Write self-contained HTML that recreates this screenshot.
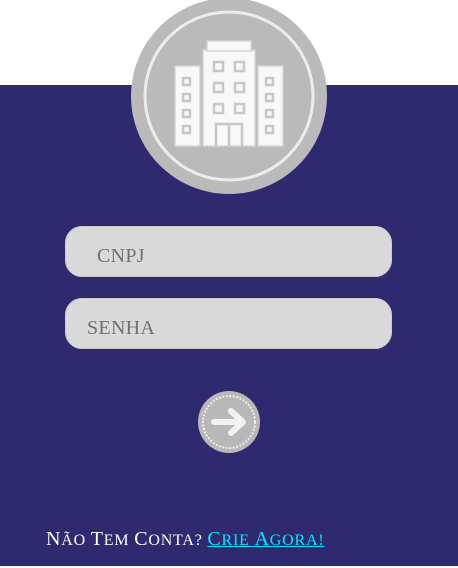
<!DOCTYPE html>
<html><head><meta charset="utf-8"><style>
html,body{margin:0;padding:0;width:458px;height:568px;background:#fff;overflow:hidden;position:relative}
.panel{position:absolute;left:0;top:85px;width:458px;height:481px;background:#2f2a70}
.inp{position:absolute;left:65px;width:327px;height:51px;background:#d9d9d9;border-radius:17px;box-shadow:inset 0 0 0 1px #c9c9c9}
.inp span{position:absolute;font-family:"Liberation Serif",serif;font-size:20px;color:#707070;letter-spacing:0.3px}
.bottom{position:absolute;left:46px;top:528px;font-family:"Liberation Serif",serif;font-size:16px;color:#fff;letter-spacing:0.8px;white-space:nowrap}
.bottom b{font-weight:normal;font-size:20px}
.bottom a{color:#00e8ff;text-decoration:underline}
</style></head><body>
<div class="panel"></div>
<svg style="position:absolute;left:0;top:0" width="458" height="568">
 <circle cx="229" cy="96" r="98" fill="#bababa"/>
 <circle cx="229" cy="96" r="84" fill="none" stroke="#ececec" stroke-width="3"/>
 <g fill="#f8f8f8" stroke="#d4d4d4" stroke-width="1.5">
  <rect x="175" y="66" width="25" height="80"/>
  <rect x="258" y="66" width="25" height="80"/>
  <rect x="203" y="50" width="52" height="96"/>
  <rect x="207" y="41" width="44" height="10"/>
 </g>
 <g fill="none" stroke="#c8c8c8" stroke-width="2.5">
  <rect x="214" y="62" width="9" height="9"/><rect x="235" y="62" width="9" height="9"/>
  <rect x="214" y="83" width="9" height="9"/><rect x="235" y="83" width="9" height="9"/>
  <rect x="214" y="104" width="9" height="9"/><rect x="235" y="104" width="9" height="9"/>
  <rect x="183" y="78" width="7" height="7"/><rect x="183" y="94" width="7" height="7"/>
  <rect x="183" y="110" width="7" height="7"/><rect x="183" y="126" width="7" height="7"/>
  <rect x="266" y="78" width="7" height="7"/><rect x="266" y="94" width="7" height="7"/>
  <rect x="266" y="110" width="7" height="7"/><rect x="266" y="126" width="7" height="7"/>
  <path d="M216 146V124H242V146M229 124V146"/>
 </g>
 <circle cx="229" cy="422" r="31" fill="#b8b8b8"/>
 <circle cx="229" cy="422" r="26" fill="none" stroke="#ececec" stroke-width="2" stroke-dasharray="2 1.5"/>
 <path d="M214 422H242M231 411L243 422L231 433" fill="none" stroke="#f2f2f2" stroke-width="6" stroke-linecap="round" stroke-linejoin="round"/>
</svg>
<div class="inp" style="top:226px"><span style="left:32px;top:19px">CNPJ</span></div>
<div class="inp" style="top:298px"><span style="left:22px;top:19px">SENHA</span></div>
<div class="bottom"><b>N</b>ÃO <b>T</b>EM <b>C</b>ONTA? <a><b>C</b>RIE <b>A</b>GORA!</a></div>
</body></html>
